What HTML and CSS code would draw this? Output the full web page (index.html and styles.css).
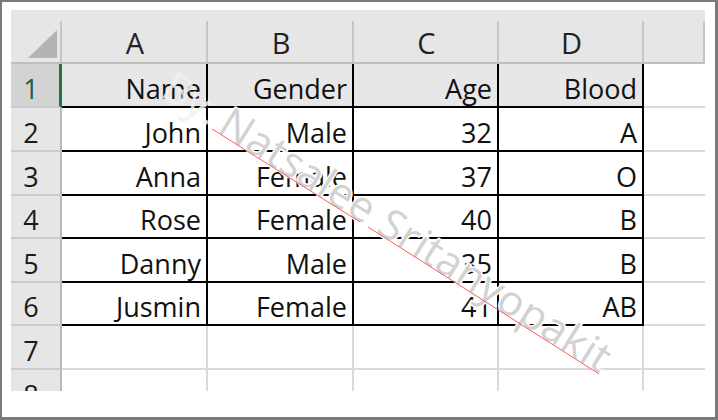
FILE: index.html
```html
<!DOCTYPE html>
<html>
<head>
<meta charset="utf-8">
<link rel="stylesheet" href="styles.css">
</head>
<body>
<div class="frame">
  <div class="sheet">
    <div class="hd corner"><svg class="tri" width="49" height="52" viewBox="0 0 49 52"><polygon points="17,48 46,48 46,20" fill="#b4b4b4"/></svg></div>
    <div class="hd">A</div>
    <div class="hd">B</div>
    <div class="hd">C</div>
    <div class="hd">D</div>
    <div class="hd"></div>

    <div class="rh sel">1</div>
    <div class="c t h1">Name</div>
    <div class="c t h1">Gender</div>
    <div class="c t h1">Age</div>
    <div class="c t h1">Blood</div>
    <div class="c e"></div>

    <div class="rh">2</div>
    <div class="c t">John</div>
    <div class="c t">Male</div>
    <div class="c t">32</div>
    <div class="c t">A</div>
    <div class="c e"></div>

    <div class="rh">3</div>
    <div class="c t">Anna</div>
    <div class="c t">Female</div>
    <div class="c t">37</div>
    <div class="c t">O</div>
    <div class="c e"></div>

    <div class="rh">4</div>
    <div class="c t">Rose</div>
    <div class="c t">Female</div>
    <div class="c t">40</div>
    <div class="c t">B</div>
    <div class="c e"></div>

    <div class="rh">5</div>
    <div class="c t">Danny</div>
    <div class="c t">Male</div>
    <div class="c t">35</div>
    <div class="c t">B</div>
    <div class="c e"></div>

    <div class="rh">6</div>
    <div class="c t">Jusmin</div>
    <div class="c t">Female</div>
    <div class="c t">41</div>
    <div class="c t">AB</div>
    <div class="c e"></div>

    <div class="rh">7</div>
    <div class="c g"></div>
    <div class="c g"></div>
    <div class="c g"></div>
    <div class="c g"></div>
    <div class="c e"></div>

    <div class="rh">8</div>
    <div class="c g"></div>
    <div class="c g"></div>
    <div class="c g"></div>
    <div class="c g"></div>
    <div class="c e"></div>
  </div>
</div>
<svg class="mark" width="718" height="420" viewBox="0 0 718 420">
  <text class="wm pre" x="209" y="127" text-anchor="end" transform="rotate(32.3 209 127)">By.</text>
  <text class="wm" x="216" y="131" textLength="454" lengthAdjust="spacing" transform="rotate(32.3 216 131)">Natsalee Sritanyopakit</text>
  <polyline points="212,129 360,222" fill="none" stroke="#ff5f5f" stroke-width="1"/>
  <polyline points="368,227 599,374" fill="none" stroke="#ff5f5f" stroke-width="1"/>
</svg>
</body>
</html>
```
FILE: styles.css
```css
* { box-sizing: border-box; margin: 0; padding: 0; }
html, body { width: 718px; height: 420px; overflow: hidden; background: #fff; }
body { position: relative; font-family: "Open Sans", "Liberation Sans", sans-serif; }

.frame {
  width: 718px;
  height: 420px;
  border: 2px solid #7a7a7a;
  border-right-width: 3px;
  border-bottom-width: 3px;
  padding: 8px 0 0 9px;
}

.sheet {
  width: 694px;
  height: 381px;
  overflow: hidden;
  display: grid;
  grid-template-columns: 51px 146px 146px 145px 145px 61px;
  grid-template-rows: 54px 44px 44px 44px 43px 44px 43px 44px 44px;
}

.hd {
  display: flex;
  align-items: flex-end;
  justify-content: center;
  background: linear-gradient(#c6c6c6, #c6c6c6) no-repeat right bottom / 2px 41px, #e6e6e6;
  border-bottom: 2px solid #bfbfbf;
  font-size: 29px;
  line-height: 1;
  color: #222;
  padding-bottom: 5px;
}
.corner { padding: 0; display: block; }
.tri { display: block; }

.rh {
  display: flex;
  align-items: flex-end;
  justify-content: center;
  background: #e6e6e6;
  border-right: 2px solid #b9b9b9;
  border-bottom: 2px solid #cbcbcb;
  font-size: 27px;
  line-height: 1;
  color: #1a1a1a;
  padding: 0 9px 4px 0;
}
.rh.sel {
  background: #d3d3d3;
  border-right: 3px solid #217346;
  color: #1f5e45;
  padding-right: 8px;
}

.c {
  display: flex;
  align-items: flex-end;
  justify-content: flex-end;
  font-size: 27px;
  line-height: 1;
  color: #111;
  padding: 0 5px 4px 0;
}
.t { border-right: 2px solid #000; border-bottom: 2px solid #000; }
.h1 { background: #e7e7e7; }
.g { border-right: 2px solid #dadada; border-bottom: 2px solid #dadada; }
.e { border-bottom: 2px solid #dadada; }

.mark { position: absolute; left: 0; top: 0; pointer-events: none; }
.wm {
  font-family: "Open Sans", "Liberation Sans", sans-serif;
  font-size: 42px;
  fill: #d2d2d2;
  stroke: #fff;
  stroke-width: 3px;
  paint-order: stroke;
  stroke-linejoin: round;
}
.wm.pre { fill: #f2f2f2; stroke: none; opacity: 0.85; }
```
